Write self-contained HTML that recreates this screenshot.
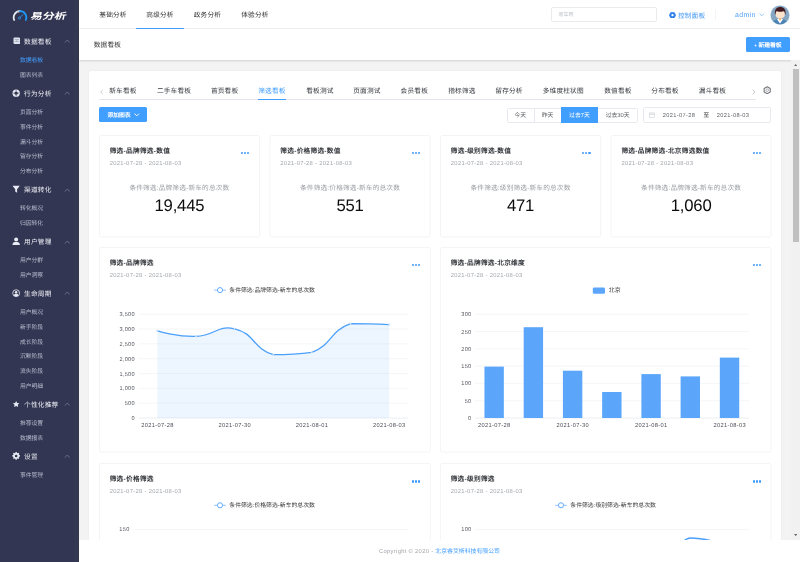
<!DOCTYPE html>
<html lang="zh-CN">
<head>
<meta charset="utf-8">
<title>易分析 - 数据看板</title>
<style>
*{box-sizing:border-box;margin:0;padding:0}
html,body{width:800px;height:562px;overflow:hidden;background:#f3f3f4;font-family:"Liberation Sans",sans-serif;color:#303133;text-rendering:geometricPrecision}
body{position:relative}
body>*{will-change:transform}
.abs{position:absolute}
.t{position:absolute;white-space:nowrap;line-height:10px;height:10px}
/* ---------- sidebar ---------- */
#side{position:absolute;left:0;top:0;width:79px;height:562px;background:#333652;overflow:hidden}
#side .strip{position:absolute;left:73.5px;top:0;width:5.5px;height:562px;background:#343850}
#logo{position:absolute;left:0;top:0;width:79px;height:31.6px}
#logo .name{position:absolute;left:30.6px;top:10.3px;height:12px;line-height:12px;font-size:8.7px;font-weight:bold;color:#fff;transform:scaleX(1.365) skewX(-9deg);transform-origin:0 50%;white-space:nowrap}
#menu{position:absolute;left:0;top:31.6px;width:79px}
.g{position:relative;height:20.6px;line-height:22.8px;font-size:6.67px;letter-spacing:.22px;color:#eceef5;padding-left:24.1px;white-space:nowrap}
.g svg.i{position:absolute;left:11.7px;top:5.5px;width:8.3px;height:8.3px}
.g svg.i.sq{left:12.7px;top:5.9px;width:7.7px;height:7.7px}
.g svg.c{position:absolute;left:63.8px;top:7.9px;width:6.6px;height:4.2px}
.s{height:14.8px;line-height:19.5px;font-size:5.83px;color:#b6bbcd;padding-left:19.9px;white-space:nowrap;letter-spacing:-.04px}
.s.on{color:#409eff}
.gap{height:1.7px}
/* ---------- header ---------- */
#head{position:absolute;left:79px;top:0;width:721px;height:29.4px;background:#fff;border-bottom:1px solid #efeff1}
.ht{position:absolute;top:0;height:28.6px;line-height:31px;font-size:6.67px;color:#303133;width:47.6px;letter-spacing:.18px;text-align:center;white-space:nowrap}
.ht.on:after{content:"";position:absolute;left:0;right:0;bottom:-0.2px;height:1px;background:#409eff}
#search{position:absolute;left:472px;top:7px;width:105.6px;height:15.2px;border:0.6px solid #e9ebef;border-radius:1.6px;font-size:5px;line-height:15.8px;color:#bfc3cb;padding-left:6.5px}
#sub{position:absolute;left:79px;top:29.2px;width:721px;height:30.6px;background:#fff;box-shadow:0 0.8px 2px rgba(0,0,0,.14)}
.btn{position:absolute;background:#409eff;color:#fff;border-radius:1.6px;text-align:center;white-space:nowrap}
/* ---------- main ---------- */
#scroll{position:absolute;left:791.2px;top:59.8px;width:8.8px;height:480px;background:#f1f1f1}
#scroll .th{position:absolute;left:2.1px;top:8.8px;width:5.9px;height:173.5px;background:#bfbfbf}
#panel{position:absolute;left:89.2px;top:70.6px;width:692px;height:480px;background:#fff;border-radius:2px;box-shadow:0 0 1.2px rgba(0,0,0,.10)}
#foot{position:absolute;left:79px;top:539.6px;width:721px;height:22.4px;background:#fff;font-size:5.83px;line-height:25.2px;color:#a3a5aa;letter-spacing:.3px;text-align:center;white-space:nowrap}
#foot span{color:#409eff;letter-spacing:.05px}

/* ---------- content ---------- */
#content{position:absolute;left:0;top:0;width:791px;height:540px;overflow:hidden}
.tab{position:absolute;top:87.15px;height:10px;line-height:10px;font-size:6.67px;color:#34373c;white-space:nowrap;letter-spacing:.2px}
.tab.on{color:#409eff}
.card{position:absolute;background:#fff;border:0.6px solid #eceef1;border-radius:1.8px}
.ct{position:absolute;margin-top:1.2px;font-size:6.67px;letter-spacing:.27px;font-weight:bold;color:#33363b;white-space:nowrap;line-height:10px;height:10px}
.cd{position:absolute;margin-top:1.1px;font-size:5.8px;color:#a2a5ab;white-space:nowrap;line-height:10px;height:10px;letter-spacing:.32px}
.cc{position:absolute;margin-top:1.2px;font-size:6.67px;letter-spacing:.17px;color:#9a9da3;white-space:nowrap;line-height:10px;height:10px;text-align:center}
.cn{position:absolute;margin-top:-.3px;font-size:16.7px;color:#0c0c0c;white-space:nowrap;line-height:20px;height:20px;text-align:center;letter-spacing:-.2px}
.dots{position:absolute;width:8.4px;height:2px}
.dots i{position:absolute;top:-.15px;width:2.2px;height:2.2px;border-radius:50%;background:#3f9bfb}
.lg{position:absolute;margin-top:1.25px;font-size:5.83px;letter-spacing:.03px;color:#333;white-space:nowrap;line-height:10px;height:10px}
.db{position:absolute;top:107.5px;height:15px;line-height:17.4px;font-size:5.83px;letter-spacing:0;color:#5f6267;text-align:center;white-space:nowrap}
svg text{font-family:"Liberation Sans",sans-serif}
</style>
</head>
<body>

<!-- ================= SIDEBAR ================= -->
<div id="side">
  <div class="strip"></div>
  <div id="logo">
    <svg class="abs" style="left:11.7px;top:8.5px;width:16px;height:15px" viewBox="0 0 32 30">
      <path d="M4.4 22 A12.6 12.6 0 0 1 16 4.4" fill="none" stroke="#e9ebf0" stroke-width="3.5" stroke-linecap="round"/>
      <path d="M11 5.4 A12.6 12.6 0 0 1 16 4.4" fill="none" stroke="#c2ccd6" stroke-width="3.5"/>
      <path d="M16 4.4 A12.6 12.6 0 0 1 27.6 22" fill="none" stroke="#1c9cfb" stroke-width="3.5" stroke-linecap="round"/>
      <circle cx="15" cy="18.2" r="2.2" fill="none" stroke="#2aa1fb" stroke-width="1.5"/>
      <path d="M16.6 16.6 L21.4 11.6" stroke="#2aa1fb" stroke-width="1.8" stroke-linecap="round"/>
    </svg>
    <div class="name">易分析</div>
  </div>
  <div id="menu">
    <div class="g"><svg class="i sq" viewBox="0 0 16 16"><rect x="1" y="1.2" width="14" height="13.6" rx="2.4" fill="#dfe4ee"/><rect x="3" y="5" width="10" height="1.1" fill="#8d93ad"/><rect x="3" y="9" width="10" height="1.1" fill="#8d93ad"/><rect x="7.45" y="5" width="1.1" height="5.1" fill="#8d93ad"/></svg>数据看板<svg class="c" viewBox="0 0 10 7"><path d="M1 6 L5 1.6 L9 6" fill="none" stroke="#8b90a8" stroke-width="1"/></svg></div>
    <div class="s on">数据看板</div>
    <div class="s">图表列表</div>
    <div class="gap"></div>
    <div class="g" style="line-height:23.3px"><svg class="i" viewBox="0 0 16 16"><circle cx="8" cy="8" r="7" fill="#e8ebf3"/><circle cx="8" cy="8" r="3.2" fill="#333652"/><path d="M8 2.4V5M8 11v2.6M2.4 8H5M11 8h2.6" stroke="#333652" stroke-width="1.3"/></svg>行为分析<svg class="c" viewBox="0 0 10 7"><path d="M1 6 L5 1.6 L9 6" fill="none" stroke="#8b90a8" stroke-width="1"/></svg></div>
    <div class="s">页面分析</div>
    <div class="s">事件分析</div>
    <div class="s">漏斗分析</div>
    <div class="s">留存分析</div>
    <div class="s">分布分析</div>
    <div class="gap"></div>
    <div class="g"><svg class="i" viewBox="0 0 16 16"><path d="M1 1.5h14L9.8 8.4V15L6.2 12.6V8.4Z" fill="#e8ebf3"/></svg>渠道转化<svg class="c" viewBox="0 0 10 7"><path d="M1 6 L5 1.6 L9 6" fill="none" stroke="#8b90a8" stroke-width="1"/></svg></div>
    <div class="s">转化概况</div>
    <div class="s">归因转化</div>
    <div class="gap"></div>
    <div class="g"><svg class="i" viewBox="0 0 16 16"><circle cx="8" cy="4.6" r="3.8" fill="#e8ebf3"/><path d="M0.8 15.2c0-4.4 3-6.2 7.2-6.2s7.2 1.8 7.2 6.2Z" fill="#e8ebf3"/></svg>用户管理<svg class="c" viewBox="0 0 10 7"><path d="M1 6 L5 1.6 L9 6" fill="none" stroke="#8b90a8" stroke-width="1"/></svg></div>
    <div class="s">用户分群</div>
    <div class="s">用户洞察</div>
    <div class="gap"></div>
    <div class="g" style="line-height:23.3px"><svg class="i" viewBox="0 0 16 16"><circle cx="8" cy="8" r="6.6" fill="none" stroke="#e8ebf3" stroke-width="1.6"/><circle cx="8" cy="6.3" r="2.3" fill="#e8ebf3"/><path d="M3.6 12.6c.6-2.4 2.2-3.2 4.4-3.2s3.8.8 4.4 3.2c-1.2 1.2-2.6 1.9-4.4 1.9s-3.2-.7-4.4-1.9Z" fill="#e8ebf3"/></svg>生命周期<svg class="c" viewBox="0 0 10 7"><path d="M1 6 L5 1.6 L9 6" fill="none" stroke="#8b90a8" stroke-width="1"/></svg></div>
    <div class="s">用户概况</div>
    <div class="s">新手阶段</div>
    <div class="s">成长阶段</div>
    <div class="s">沉默阶段</div>
    <div class="s">流失阶段</div>
    <div class="s">用户明细</div>
    <div class="gap"></div>
    <div class="g"><svg class="i" viewBox="0 0 16 16"><path d="M8 .8l2.2 4.6 5 .7-3.6 3.5.9 5L8 12.2 3.5 14.6l.9-5L.8 6.1l5-.7Z" fill="#e8ebf3" transform="translate(1.1 1) scale(.86)"/></svg>个性化推荐<svg class="c" viewBox="0 0 10 7"><path d="M1 6 L5 1.6 L9 6" fill="none" stroke="#8b90a8" stroke-width="1"/></svg></div>
    <div class="s">推荐设置</div>
    <div class="s">数据报表</div>
    <div class="gap"></div>
    <div class="g" style="line-height:23.3px"><svg class="i" viewBox="0 0 16 16"><path d="M6.6.8h2.8l.5 2.1 1.3.6 1.9-1.1 2 2-1.1 1.9.6 1.3 2.1.5v2.8l-2.1.5-.6 1.3 1.1 1.9-2 2-1.9-1.1-1.3.6-.5 2.100H6.6l-.5-2.1-1.3-.6-1.9 1.1-2-2 1.1-1.900-.6-1.3L-.7 10.900V8.100l2.100-.5.600-1.300-1.100-1.900 2-2 1.900 1.100 1.300-.6Z" fill="#e8ebf3" transform="translate(1.2 -0.700) scale(.85)"/><circle cx="8" cy="7.6" r="2.500" fill="#333652"/></svg>设置<svg class="c" viewBox="0 0 10 7"><path d="M1 6 L5 1.6 L9 6" fill="none" stroke="#8b90a8" stroke-width="1"/></svg></div>
    <div class="s">事件管理</div>
  </div>
</div>

<!-- ================= HEADER ================= -->
<div id="head">
  <div class="ht" style="left:10.2px">基础分析</div>
  <div class="ht on" style="left:57.2px">高级分析</div>
  <div class="ht" style="left:104.6px">政务分析</div>
  <div class="ht" style="left:152.1px">体验分析</div>
  <div id="search">易车网</div>
  <svg class="abs" style="left:589.9px;top:11.5px;width:7px;height:6.4px" viewBox="0 0 14 12.8"><path d="M0.300 6.400L3.600 .500h6.800L13.700 6.400 10.400 12.300H3.600Z" fill="#2f80ec" stroke="#2f80ec" stroke-width=".8" stroke-linejoin="round"/><circle cx="7" cy="6.400" r="2.300" fill="#fff"/></svg>
  <div class="t" style="left:598.9px;top:11.6px;font-size:6.67px;letter-spacing:.2px;color:#3f96f5">控制面板</div>
  <div class="abs" style="left:636.2px;top:10.200px;width:.6px;height:9.600px;background:#f3f4f6"></div>
  <div class="t" style="left:656.1px;top:10.700px;font-size:6.9px;color:#4a9df8;letter-spacing:.36px">admin</div>
  <svg class="abs" style="left:680.2px;top:13.2px;width:5.4px;height:3.4px" viewBox="0 0 10 6"><path d="M1 1l4 4 4-4" fill="none" stroke="#5aa9fb" stroke-width="1.200"/></svg>
  <!-- avatar -->
  <svg class="abs" style="left:691.35px;top:4.500px;width:20px;height:20px" viewBox="0 0 40 40">
    <defs><clipPath id="av"><circle cx="20" cy="20" r="18.400"/></clipPath></defs>
    <circle cx="20" cy="20" r="19.500" fill="#bcd3e5"/>
    <circle cx="20" cy="20" r="18.400" fill="#84a6c2"/>
    <g clip-path="url(#av)">
      <path d="M3 41C3 32.500 9.500 29.400 16 28.300H24C30.500 29.400 37 32.500 37 41Z" fill="#4d84b3"/>
      <path d="M14.300 28.800L20 37l5.700-8.200L23.200 26.800H16.800Z" fill="#fff"/>
      <path d="M17.200 26.500h5.600L20 32.200Z" fill="#f5a24c"/>
      <rect x="11.200" y="8.500" width="18.500" height="18.200" rx="8.200" fill="#fde2cb"/>
      <path d="M10 18.500C8.600 8.800 13.800 4.200 20.500 4.200S32.300 8.800 31 18.500L29.700 18.300C29.800 14.200 29 12.800 27.200 12.400 22 14 15.200 14 13.600 12.700 12 13.200 11.300 14.500 11.300 18.300Z" fill="#431b1f"/>
    </g>
  </svg>
</div>

<!-- ================= SUB HEADER ================= -->
<div id="sub">
  <div class="t" style="left:14.700px;top:12.000px;font-size:6.67px;color:#303133;letter-spacing:.23px">数据看板</div>
  <div class="btn" style="left:666.8px;top:7.800px;width:44.200px;height:15.300px;line-height:17.100px;font-size:5.83px;letter-spacing:-.05px;font-weight:bold"><span style="font-size:4.6px;position:relative;top:-.3px">+</span> 新建看板</div>
</div>

<!-- ================= MAIN ================= -->
<div id="scroll">
  <div class="th"></div>
  <svg class="abs" style="left:2.900px;top:3.900px;width:3.300px;height:2.100px" viewBox="0 0 8 5"><path d="M0 5L4 0l4 5Z" fill="#6a6a6a"/></svg>
  <svg class="abs" style="left:2.900px;top:474.200px;width:3.300px;height:2.100px" viewBox="0 0 8 5"><path d="M0 0l4 5 4-5Z" fill="#6a6a6a"/></svg>
</div>

<div id="panel"></div>

<div id="content">
<svg class="abs" style="left:0;top:0;width:800px;height:562px" viewBox="0 0 800 562"><g fill="#fff" stroke="#e6e9ef" stroke-width=".5"><rect x="99.50" y="135.50" width="160.15" height="101.40" rx="1.7"/><rect x="270.00" y="135.50" width="160.15" height="101.40" rx="1.7"/><rect x="440.50" y="135.50" width="160.15" height="101.40" rx="1.7"/><rect x="611.00" y="135.50" width="160.15" height="101.40" rx="1.7"/><rect x="99.50" y="247.40" width="330.80" height="204.70" rx="1.7"/><rect x="440.45" y="247.40" width="330.65" height="204.70" rx="1.7"/><rect x="99.50" y="463.40" width="330.80" height="136.60" rx="1.7"/><rect x="440.45" y="463.40" width="330.65" height="136.60" rx="1.7"/></g></svg>
<svg class="abs" style="left:99.9px;top:88.7px;width:3.6px;height:6px" viewBox="0 0 6 10"><path d="M5 1L1.2 5 5 9" fill="none" stroke="#c4c7cd" stroke-width="1.5"/></svg>
<div class="tab" style="left:109.2px">新车看板</div>
<div class="tab" style="left:156.9px">二手车看板</div>
<div class="tab" style="left:210.9px">首页看板</div>
<div class="tab on" style="left:258.2px">筛选看板</div>
<div class="tab" style="left:306.2px">看板测试</div>
<div class="tab" style="left:353.2px">页面测试</div>
<div class="tab" style="left:400.6px">会员看板</div>
<div class="tab" style="left:448.2px">指标筛选</div>
<div class="tab" style="left:495.3px">留存分析</div>
<div class="tab" style="left:542.7px">多维度柱状图</div>
<div class="tab" style="left:604.2px">数值看板</div>
<div class="tab" style="left:651.3px">分布看板</div>
<div class="tab" style="left:698.7px">漏斗看板</div>
<div class="abs" style="left:99.3px;top:98.9px;width:657px;height:.7px;background:#e3e6ec"></div>
<div class="abs" style="left:258.2px;top:98.5px;width:27.6px;height:1.1px;background:#409eff"></div>
<svg class="abs" style="left:751.9px;top:88.6px;width:3.6px;height:6px" viewBox="0 0 6 10"><path d="M1 1l3.800 4L1 9" fill="none" stroke="#c4c7cd" stroke-width="1.600"/></svg>
<svg class="abs" style="left:763.1px;top:85.7px;width:8.4px;height:8.4px" viewBox="0 0 16 16"><path d="M8 1.300l5.800 3.350v6.700L8 14.700 2.200 11.350V4.650Z" fill="none" stroke="#73767c" stroke-width="2.100" stroke-linejoin="round"/><circle cx="8" cy="8" r="2.500" fill="none" stroke="#8d9096" stroke-width="1.300"/></svg>
<div class="btn" style="left:99.3px;top:107.2px;width:47.8px;height:15.3px;line-height:18.2px;font-size:5.83px;letter-spacing:-.08px;text-align:left;padding-left:8.3px;font-weight:bold">添加图表<svg style="position:absolute;left:34.7px;top:6px;width:5.6px;height:3.500px" viewBox="0 0 10 6"><path d="M1 1l4 4 4-4" fill="none" stroke="#fff" stroke-width="1.700"/></svg></div>
<div class="abs" style="left:506.5px;top:107.5px;width:131px;height:15px;border:.6px solid #e7e9ee;border-radius:1.600px;background:#fff"></div>
<div class="abs" style="left:533.8px;top:107.5px;width:.6px;height:15px;background:#e7e9ee"></div>
<div class="abs" style="left:561px;top:107.4px;width:36.900px;height:15.200px;background:#409eff"></div>
<div class="db" style="left:506.5px;width:27.500px">今天</div>
<div class="db" style="left:534px;width:27px">昨天</div>
<div class="db" style="left:561px;width:36.900px;color:#fff">过去7天</div>
<div class="db" style="left:597.9px;width:39.600px">过去30天</div>
<div class="abs" style="left:643.1px;top:107.4px;width:128px;height:15.200px;border:.6px solid #e7e9ee;border-radius:1.600px;background:#fff"></div>
<svg class="abs" style="left:648.7px;top:112px;width:6px;height:6px" viewBox="0 0 12 12"><rect x="1" y="2" width="10" height="9" fill="none" stroke="#c3c7cf" stroke-width="1"/><path d="M1 5h10M4 .800v2.400M8 .800v2.400" stroke="#c3c7cf" stroke-width="1"/></svg>
<div class="db" style="left:659px;width:40px;font-size:5.650px;letter-spacing:.36px">2021-07-28</div>
<div class="db" style="left:699.3px;width:14px;font-size:5.600px;color:#303133">至</div>
<div class="db" style="left:713px;width:40px;font-size:5.650px;letter-spacing:.36px">2021-08-03</div>
<div class="ct" style="left:109.7px;top:145.5px">筛选-品牌筛选-数值</div>
<div class="cd" style="left:109.7px;top:158.3px">2021-07-28 - 2021-08-03</div>
<div class="dots" style="left:241.0px;top:152.3px"><i style="left:-.1px"></i><i style="left:3.100px"></i><i style="left:6.300px"></i></div>
<div class="cc" style="left:99.4px;top:182.5px;width:160px">条件筛选:品牌筛选-新车的总次数</div>
<div class="cn" style="left:99.4px;top:196.1px;width:160px">19,445</div>
<div class="ct" style="left:280.3px;top:145.5px">筛选-价格筛选-数值</div>
<div class="cd" style="left:280.3px;top:158.3px">2021-07-28 - 2021-08-03</div>
<div class="dots" style="left:411.6px;top:152.3px"><i style="left:-.1px"></i><i style="left:3.100px"></i><i style="left:6.300px"></i></div>
<div class="cc" style="left:270.0px;top:182.5px;width:160px">条件筛选:价格筛选-新车的总次数</div>
<div class="cn" style="left:270.0px;top:196.1px;width:160px">551</div>
<div class="ct" style="left:450.8px;top:145.5px">筛选-级别筛选-数值</div>
<div class="cd" style="left:450.8px;top:158.3px">2021-07-28 - 2021-08-03</div>
<div class="dots" style="left:582.1px;top:152.3px"><i style="left:-.1px"></i><i style="left:3.100px"></i><i style="left:6.300px"></i></div>
<div class="cc" style="left:440.5px;top:182.5px;width:160px">条件筛选:级别筛选-新车的总次数</div>
<div class="cn" style="left:440.5px;top:196.1px;width:160px">471</div>
<div class="ct" style="left:621.4px;top:145.5px">筛选-品牌筛选-北京筛选数值</div>
<div class="cd" style="left:621.4px;top:158.3px">2021-07-28 - 2021-08-03</div>
<div class="dots" style="left:752.7px;top:152.3px"><i style="left:-.1px"></i><i style="left:3.100px"></i><i style="left:6.300px"></i></div>
<div class="cc" style="left:611.1px;top:182.5px;width:160px">条件筛选:品牌筛选-新车的总次数</div>
<div class="cn" style="left:611.1px;top:196.1px;width:160px">1,060</div>
<div class="ct" style="left:109.7px;top:257.7px">筛选-品牌筛选</div>
<div class="cd" style="left:109.7px;top:270.0px">2021-07-28 - 2021-08-03</div>
<div class="dots" style="left:411.8px;top:264.3px"><i style="left:-.1px"></i><i style="left:3.100px"></i><i style="left:6.300px"></i></div>
<div class="ct" style="left:450.7px;top:257.7px">筛选-品牌筛选-北京维度</div>
<div class="cd" style="left:450.7px;top:270.0px">2021-07-28 - 2021-08-03</div>
<div class="dots" style="left:752.8px;top:264.3px"><i style="left:-.1px"></i><i style="left:3.100px"></i><i style="left:6.300px"></i></div>
<div class="ct" style="left:109.7px;top:473.6px">筛选-价格筛选</div>
<div class="cd" style="left:109.7px;top:486.3px">2021-07-28 - 2021-08-03</div>
<div class="dots" style="left:411.8px;top:480.6px"><i style="left:-.1px"></i><i style="left:3.100px"></i><i style="left:6.300px"></i></div>
<div class="ct" style="left:450.7px;top:473.6px">筛选-级别筛选</div>
<div class="cd" style="left:450.7px;top:486.3px">2021-07-28 - 2021-08-03</div>
<div class="dots" style="left:752.8px;top:480.6px"><i style="left:-.1px"></i><i style="left:3.100px"></i><i style="left:6.300px"></i></div>
<div class="lg" style="left:229.3px;top:284.900px">条件筛选:品牌筛选-新车的总次数</div>
<div class="lg" style="left:608.8px;top:284.900px">北京</div>
<div class="lg" style="left:229.3px;top:500.200px">条件筛选:价格筛选-新车的总次数</div>
<div class="lg" style="left:570.3px;top:500.200px">条件筛选:级别筛选-新车的总次数</div>
<!--CHARTS--><svg class="abs" style="left:0;top:0;width:800px;height:562px" viewBox="0 0 800 562">
<path d="M138.8 418.00H408.2" stroke="#dcdfe4" stroke-width=".55"/>
<text x="134.90" y="420.00" font-size="5.6" fill="#565960" text-anchor="end" letter-spacing=".3">0</text>
<path d="M138.8 403.17H408.2" stroke="#eceef1" stroke-width=".55"/>
<text x="134.90" y="405.17" font-size="5.6" fill="#565960" text-anchor="end" letter-spacing=".3">500</text>
<path d="M138.8 388.34H408.2" stroke="#eceef1" stroke-width=".55"/>
<text x="134.90" y="390.34" font-size="5.6" fill="#565960" text-anchor="end" letter-spacing=".3">1,000</text>
<path d="M138.8 373.51H408.2" stroke="#eceef1" stroke-width=".55"/>
<text x="134.90" y="375.51" font-size="5.6" fill="#565960" text-anchor="end" letter-spacing=".3">1,500</text>
<path d="M138.8 358.69H408.2" stroke="#eceef1" stroke-width=".55"/>
<text x="134.90" y="360.69" font-size="5.6" fill="#565960" text-anchor="end" letter-spacing=".3">2,000</text>
<path d="M138.8 343.86H408.2" stroke="#eceef1" stroke-width=".55"/>
<text x="134.90" y="345.86" font-size="5.6" fill="#565960" text-anchor="end" letter-spacing=".3">2,500</text>
<path d="M138.8 329.03H408.2" stroke="#eceef1" stroke-width=".55"/>
<text x="134.90" y="331.03" font-size="5.6" fill="#565960" text-anchor="end" letter-spacing=".3">3,000</text>
<path d="M138.8 314.20H408.2" stroke="#eceef1" stroke-width=".55"/>
<text x="134.90" y="316.20" font-size="5.6" fill="#565960" text-anchor="end" letter-spacing=".3">3,500</text>
<path d="M157.30 330.90 C157.30 330.90 176.71 336.92 195.95 336.40 C215.36 335.87 216.88 324.60 234.60 328.80 C255.53 333.75 252.16 348.26 273.25 354.70 C290.81 354.70 294.68 354.70 311.90 352.40 C333.33 343.79 329.11 331.35 350.55 323.65 C367.76 323.65 389.20 324.65 389.20 324.65 L389.20 418.00 L157.30 418.00Z" fill="#409eff" fill-opacity=".095"/>
<path d="M157.30 330.90 C157.30 330.90 176.71 336.92 195.95 336.40 C215.36 335.87 216.88 324.60 234.60 328.80 C255.53 333.75 252.16 348.26 273.25 354.70 C290.81 354.70 294.68 354.70 311.90 352.40 C333.33 343.79 329.11 331.35 350.55 323.65 C367.76 323.65 389.20 324.65 389.20 324.65" fill="none" stroke="#4a9ffb" stroke-width="1.3" stroke-linejoin="round"/>
<circle cx="157.30" cy="330.90" r=".8" fill="#fff" stroke="#8cc1fc" stroke-width=".4"/>
<circle cx="195.95" cy="336.40" r=".8" fill="#fff" stroke="#8cc1fc" stroke-width=".4"/>
<circle cx="234.60" cy="328.80" r=".8" fill="#fff" stroke="#8cc1fc" stroke-width=".4"/>
<circle cx="273.25" cy="354.70" r=".8" fill="#fff" stroke="#8cc1fc" stroke-width=".4"/>
<circle cx="311.90" cy="352.40" r=".8" fill="#fff" stroke="#8cc1fc" stroke-width=".4"/>
<circle cx="350.55" cy="323.65" r=".8" fill="#fff" stroke="#8cc1fc" stroke-width=".4"/>
<circle cx="389.20" cy="324.65" r=".8" fill="#fff" stroke="#8cc1fc" stroke-width=".4"/>
<text x="157.47" y="427.00" font-size="5.7" fill="#4b4e55" text-anchor="middle" letter-spacing=".34">2021-07-28</text>
<text x="234.77" y="427.00" font-size="5.7" fill="#4b4e55" text-anchor="middle" letter-spacing=".34">2021-07-30</text>
<text x="312.07" y="427.00" font-size="5.7" fill="#4b4e55" text-anchor="middle" letter-spacing=".34">2021-08-01</text>
<text x="389.37" y="427.00" font-size="5.7" fill="#4b4e55" text-anchor="middle" letter-spacing=".34">2021-08-03</text>
<path d="M214.20 290.10h11.6" stroke="#85bdfc" stroke-width=".95"/><circle cx="220.00" cy="290.10" r="2.55" fill="#fff" stroke="#62acfc" stroke-width="1"/>
<path d="M475 418.00H749" stroke="#dcdfe4" stroke-width=".55"/>
<text x="471.50" y="420.00" font-size="5.6" fill="#565960" text-anchor="end" letter-spacing=".3">0</text>
<path d="M475 400.70H749" stroke="#eceef1" stroke-width=".55"/>
<text x="471.50" y="402.70" font-size="5.6" fill="#565960" text-anchor="end" letter-spacing=".3">50</text>
<path d="M475 383.40H749" stroke="#eceef1" stroke-width=".55"/>
<text x="471.50" y="385.40" font-size="5.6" fill="#565960" text-anchor="end" letter-spacing=".3">100</text>
<path d="M475 366.10H749" stroke="#eceef1" stroke-width=".55"/>
<text x="471.50" y="368.10" font-size="5.6" fill="#565960" text-anchor="end" letter-spacing=".3">150</text>
<path d="M475 348.80H749" stroke="#eceef1" stroke-width=".55"/>
<text x="471.50" y="350.80" font-size="5.6" fill="#565960" text-anchor="end" letter-spacing=".3">200</text>
<path d="M475 331.50H749" stroke="#eceef1" stroke-width=".55"/>
<text x="471.50" y="333.50" font-size="5.6" fill="#565960" text-anchor="end" letter-spacing=".3">250</text>
<path d="M475 314.20H749" stroke="#eceef1" stroke-width=".55"/>
<text x="471.50" y="316.20" font-size="5.6" fill="#565960" text-anchor="end" letter-spacing=".3">300</text>
<rect x="484.45" y="366.60" width="19.4" height="51.40" fill="#5ba6fb"/>
<rect x="523.68" y="327.20" width="19.4" height="90.80" fill="#5ba6fb"/>
<rect x="562.91" y="370.70" width="19.4" height="47.30" fill="#5ba6fb"/>
<rect x="602.14" y="392.00" width="19.4" height="26.00" fill="#5ba6fb"/>
<rect x="641.37" y="374.10" width="19.4" height="43.90" fill="#5ba6fb"/>
<rect x="680.60" y="376.40" width="19.4" height="41.60" fill="#5ba6fb"/>
<rect x="719.83" y="357.60" width="19.4" height="60.40" fill="#5ba6fb"/>
<text x="494.32" y="427.00" font-size="5.7" fill="#4b4e55" text-anchor="middle" letter-spacing=".34">2021-07-28</text>
<text x="572.78" y="427.00" font-size="5.7" fill="#4b4e55" text-anchor="middle" letter-spacing=".34">2021-07-30</text>
<text x="651.24" y="427.00" font-size="5.7" fill="#4b4e55" text-anchor="middle" letter-spacing=".34">2021-08-01</text>
<text x="729.70" y="427.00" font-size="5.7" fill="#4b4e55" text-anchor="middle" letter-spacing=".34">2021-08-03</text>
<rect x="592.8" y="287.4" width="12.2" height="6.4" rx="1.4" fill="#5ba6fb"/>
<path d="M214.20 505.30h11.6" stroke="#85bdfc" stroke-width=".95"/><circle cx="220.00" cy="505.30" r="2.55" fill="#fff" stroke="#62acfc" stroke-width="1"/>
<path d="M555.20 505.30h11.6" stroke="#85bdfc" stroke-width=".95"/><circle cx="561.00" cy="505.30" r="2.55" fill="#fff" stroke="#62acfc" stroke-width="1"/>
<path d="M134.4 529.5H408.2" stroke="#eceef1" stroke-width=".55"/>
<text x="129.60" y="531.20" font-size="5.6" fill="#565960" text-anchor="end" letter-spacing=".3">150</text>
<path d="M475 529.5H749" stroke="#eceef1" stroke-width=".55"/>
<text x="471.50" y="531.20" font-size="5.6" fill="#565960" text-anchor="end" letter-spacing=".3">100</text>
<path d="M683.5 541.5C685.5 539.5 688 538 690.6 538C697 538 703 538.9 712 540.8" fill="none" stroke="#4a9ffb" stroke-width="1.3"/>
</svg><!--/CHARTS-->
</div>

<div id="foot">Copyright © 2020 - <span>北京睿艾斯科技有限公司</span></div>

</body>
</html>
